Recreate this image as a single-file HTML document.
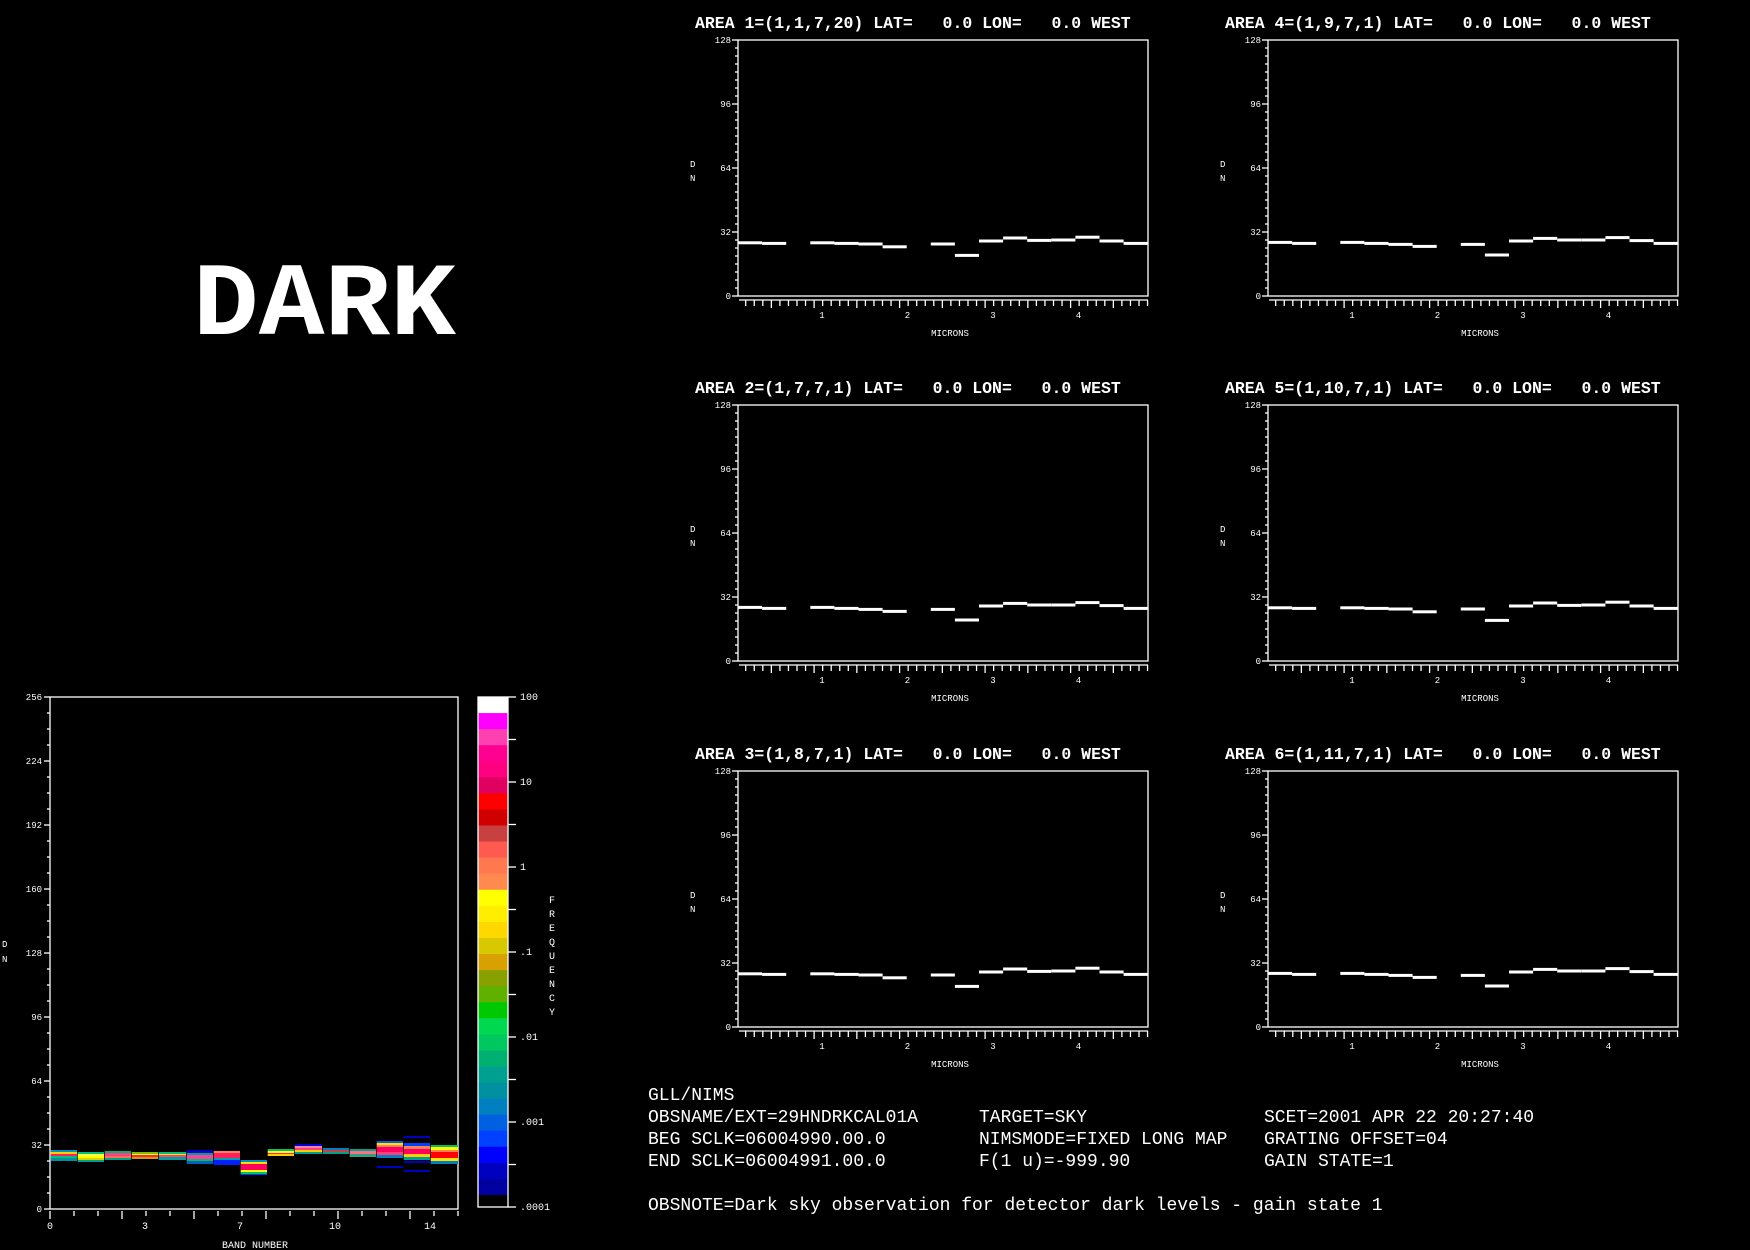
<!DOCTYPE html>
<html><head><meta charset="utf-8"><style>
html,body{margin:0;padding:0;background:#000;width:1750px;height:1250px;overflow:hidden}
svg{display:block}
text{font-family:"Liberation Mono",monospace;fill:#fff}
</style></head><body>
<svg id="s" width="1750" height="1250" xmlns="http://www.w3.org/2000/svg">
<rect width="1750" height="1250" fill="#000"/>
<text x="193" y="334" font-size="104" font-weight="bold" textLength="263" lengthAdjust="spacingAndGlyphs">DARK</text>
<g font-size="18" id="info">
<text x="648" y="1100">GLL/NIMS</text>
<text x="648" y="1122">OBSNAME/EXT=29HNDRKCAL01A</text>
<text x="979" y="1122">TARGET=SKY</text>
<text x="1264" y="1122">SCET=2001 APR 22 20:27:40</text>
<text x="648" y="1144">BEG SCLK=06004990.00.0</text>
<text x="979" y="1144">NIMSMODE=FIXED LONG MAP</text>
<text x="1264" y="1144">GRATING OFFSET=04</text>
<text x="648" y="1166">END SCLK=06004991.00.0</text>
<text x="979" y="1166">F(1 u)=-999.90</text>
<text x="1264" y="1166">GAIN STATE=1</text>
<text x="648" y="1210">OBSNOTE=Dark sky observation for detector dark levels - gain state 1</text>
</g>
<g id="g"></g>
</svg>
<script>
var g=document.getElementById('g'),h='';
function R(x,y,w,hh,c){h+='<rect x="'+x+'" y="'+y+'" width="'+w+'" height="'+hh+'" fill="'+c+'"/>';}
function L(x1,y1,x2,y2){h+='<line x1="'+x1+'" y1="'+y1+'" x2="'+x2+'" y2="'+y2+'" stroke="#fff" stroke-width="1.3"/>';}
function T(x,y,s,fs,a,extra){h+='<text x="'+x+'" y="'+y+'" font-size="'+fs+'"'+(a?' text-anchor="'+a+'"':'')+(extra||'')+'>'+s+'</text>';}
var titles=[["AREA 1=(1,1,7,20) LAT=   0.0 LON=   0.0 WEST","AREA 4=(1,9,7,1) LAT=   0.0 LON=   0.0 WEST"],
["AREA 2=(1,7,7,1) LAT=   0.0 LON=   0.0 WEST","AREA 5=(1,10,7,1) LAT=   0.0 LON=   0.0 WEST"],
["AREA 3=(1,8,7,1) LAT=   0.0 LON=   0.0 WEST","AREA 6=(1,11,7,1) LAT=   0.0 LON=   0.0 WEST"]];
var data=[26.8,26.3,null,26.8,26.3,25.8,24.8,null,25.8,20.5,27.5,28.8,28,28,29.2,27.7,26.3];
var cols=[738,1268],rows=[40,405,771];
for(var r=0;r<3;r++)for(var c=0;c<2;c++){
 var x0=cols[c],y0=rows[r],W=410,H=256,yb=y0+H;
 h+='<text x="'+(x0-43)+'" y="'+(y0-12)+'" font-size="16.5" font-weight="bold" xml:space="preserve">'+titles[r][c]+'</text>';
 h+='<rect x="'+x0+'" y="'+y0+'" width="'+W+'" height="'+H+'" fill="none" stroke="#fff" stroke-width="1.3"/>';
 for(var d=0;d<=128;d+=4){var yy=yb-d*2;L(x0-(d%32==0?6:3),yy,x0,yy);}
 [0,32,64,96,128].forEach(function(d){T(x0-7,yb-d*2+3,d,9,'end');});
 T(x0-48,y0+127,'D',9);T(x0-48,y0+141,'N',9);
 L(x0+1,yb+4,x0+W,yb+4);
 for(var i=0;i<48;i++){var xx=x0+7.7+i*8.55;L(xx,yb+4,xx,yb+(i%5==3?12:10));}
 [1,2,3,4].forEach(function(m){T(x0+84+(m-1)*85.5,yb+22,m,9,'middle');});
 T(x0+212,yb+40,'MICRONS',9,'middle');
 for(var k=0;k<17;k++){if(data[k]==null)continue;var v=data[k]+((r+c)%2?0:0.2*((k%3)-1));
  var yy=yb-v*2;R(x0+k*24.1,yy-1.5,24.1,3,'#fff');}
}
// histogram
var hx=50,hy=697,hw=408,hh=512,hb=1209;
h+='<rect x="'+hx+'" y="'+hy+'" width="'+hw+'" height="'+hh+'" fill="none" stroke="#fff" stroke-width="1.3"/>';
for(var d=0;d<=256;d+=8){var yy=hb-d*2;L(hx-(d%32==0?6:3),yy,hx,yy);}
for(var d=0;d<=256;d+=32)T(hx-8,hb-d*2+3,d,9,'end');
T(2,947,'D',9);T(2,962,'N',9);
for(var i=0;i<18;i++){var xx=hx+i*24;if(xx>hx+hw)break;L(xx,hb+2,xx,hb+(i%3==0?10:7));}
[[0,50],[3,145],[7,240],[10,335],[14,430]].forEach(function(p){T(p[1],1229,p[0],10,'middle');});
T(255,1248,'BAND NUMBER',10,'middle');
var bx=[50,77,104,131,158,186,213,240,267,294,322,349,376,403,430,458];
var bands=[
[[1150,1152,'#0090c0'],[1152,1154,'#ffd000'],[1154,1156,'#ff2060'],[1156,1158,'#00c080'],[1158,1161,'#0090a0']],
[[1152,1154,'#00c080'],[1154,1156,'#ffff40'],[1156,1158,'#ffff00'],[1158,1160,'#e0d000'],[1160,1162,'#00a090']],
[[1151,1153,'#00b080'],[1153,1156,'#ff4080'],[1156,1158,'#ff7050'],[1158,1160,'#00a090']],
[[1152,1154,'#80c000'],[1154,1155,'#ffff00'],[1155,1157,'#ff2060'],[1157,1159,'#d0a000']],
[[1152,1154,'#00c070'],[1154,1155,'#ffe000'],[1155,1157,'#ff4080'],[1157,1160,'#00a0a0']],
[[1150,1153,'#0000c0'],[1153,1155,'#00a090'],[1155,1159,'#ff40a0'],[1159,1161,'#00c060'],[1161,1164,'#0060c0']],
[[1151,1153,'#ff8050'],[1153,1158,'#ff2060'],[1158,1160,'#00a0a0'],[1160,1165,'#0020ff']],
[[1160,1162,'#0090c0'],[1162,1164,'#ffe000'],[1164,1170,'#ff0060'],[1170,1172,'#ffff00'],[1172,1174,'#00c070'],[1174,1175,'#0040ff']],
[[1149,1151,'#00c080'],[1151,1153,'#ffff00'],[1153,1154,'#ff2060'],[1154,1156,'#ffd000']],
[[1144,1146,'#0000d0'],[1146,1148,'#ff80a0'],[1148,1150,'#ff4080'],[1150,1152,'#ffd000'],[1152,1154,'#00a090']],
[[1148,1150,'#0080c0'],[1150,1152,'#c84040'],[1152,1154,'#00a090']],
[[1149,1151,'#00a090'],[1151,1154,'#ff7080'],[1154,1157,'#30a080']],
[[1141,1143,'#0060e0'],[1143,1145,'#ffe000'],[1145,1147,'#ff8060'],[1147,1152,'#ff0060'],[1152,1155,'#ff4080'],[1155,1158,'#0080c0'],[1166,1168,'#0000c0']],
[[1136,1138,'#0000c0'],[1143,1146,'#0040ff'],[1146,1149,'#ff8050'],[1149,1154,'#ff0060'],[1154,1157,'#ffd000'],[1157,1160,'#00a090'],[1161,1163,'#0000c0'],[1170,1172,'#0000c0']],
[[1145,1147,'#00c070'],[1147,1150,'#ffff00'],[1150,1152,'#ff8050'],[1152,1158,'#ff0000'],[1158,1161,'#ffe000'],[1161,1164,'#0080c0']]];
bands.forEach(function(b,i){b.forEach(function(s){R(bx[i]+0.7,s[0],bx[i+1]-bx[i]-0.7,s[1]-s[0],s[2]);});});
// colorbar
var cb=['#ffffff','#ff00ff','#ff40b0','#ff0090','#ff0080','#e00060','#ff0000','#d00000','#c84040','#ff5a50','#ff7850','#ff8a50','#ffff00','#ffee00','#ffd800','#d8c800','#d8a000','#88a000','#60b000','#00c800','#00d850','#00c860','#00b070','#00a090','#0090a0','#0080c0','#0060e0','#0040ff','#0000ff','#0000c0','#0000a0','#000000'];
var cy=697,step=510/ (cb.length-0.25);
for(var i=0;i<cb.length;i++){var y1=cy+i*step;var hgt=(i==cb.length-1)?1207-y1:step+0.5;R(478,y1,30,hgt,cb[i]);}
h+='<rect x="478" y="697" width="30" height="510" fill="none" stroke="#fff" stroke-width="1.3"/>';
for(var i=0;i<=12;i++){var yy=697+i*42.5;L(508,yy,516,yy);}
[['100',697],['10',782],['1',867],['.1',952],['.01',1037],['.001',1122],['.0001',1207]].forEach(function(p){T(520,p[1]+3,p[0],10);});
'FREQUENCY'.split('').forEach(function(ch,i){T(552,903+i*14,ch,10,'middle');});
g.innerHTML=h;
</script>
</body></html>
